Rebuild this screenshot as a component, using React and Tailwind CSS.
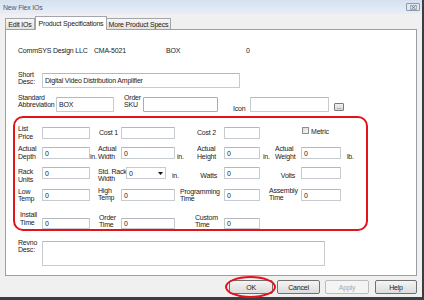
import React from "react";

function Lbl({ c, a, b }) {
  return (
    <div className={"shrink-0 flex flex-col whitespace-nowrap " + c}>
      <span>{a}</span>
      {b ? <span>{b}</span> : null}
    </div>
  );
}

function Inp({ c, v, blue }) {
  return (
    <div
      className={
        "shrink-0 bg-white border rounded-[1px] flex items-center pl-[2px] whitespace-nowrap overflow-hidden " +
        (blue ? "border-[#8fb3dc]" : "border-[#c6cad1] border-t-[#b3b7bf]") +
        " " +
        c
      }
    >
      {v}
    </div>
  );
}

function Btn({ children, disabled }) {
  return (
    <div
      className={
        "w-full h-full border rounded-[2px] flex items-center justify-center " +
        (disabled
          ? "border-[#bcbcbc] bg-[#f4f4f4] text-[#a9a9a9]"
          : "border-[#707070] bg-linear-to-b from-[#f4f4f4] to-[#dcdcdc] text-[#222]")
      }
    >
      {children}
    </div>
  );
}

export default function App() {
  return (
    <div className="w-[424px] h-[300px] bg-[#f0f0f0] border-r-2 border-b-[3px] border-[#3a3d43] flex flex-col font-['Liberation_Sans',Arial,sans-serif] text-[7px] tracking-[-0.2px] text-[#222] leading-none">
      {/* title bar */}
      <div className="h-[14px] shrink-0 flex items-center justify-between pl-[3px] pr-[2px] bg-linear-to-b from-[#d6e1f0] to-[#e7eef8]">
        <span className="text-[#4f5966]">New Flex IOs</span>
        <div className="w-[14px] h-[8px] border border-[#8d99a8] rounded-[1px] bg-[#e2e8f0] flex items-center justify-center">
          <svg width="7" height="5" viewBox="0 0 7 5">
            <rect x="0.5" y="0.5" width="6" height="4" fill="none" stroke="#9aa3ae" strokeWidth="0.8" />
            <path d="M1.5 1L5.5 4M5.5 1L1.5 4" stroke="#6f7a88" strokeWidth="0.9" />
          </svg>
        </div>
      </div>

      {/* tabs */}
      <div className="h-[15px] shrink-0 flex items-end pl-[5px]">
        <div className="w-[30px] h-[11px] border border-b-0 border-[#a3a7ad] bg-linear-to-b from-[#f6f6f6] to-[#e3e3e3] flex items-center justify-center">
          Edit IOs
        </div>
        <div className="relative z-10 w-[72px] h-[14px] -mb-px border border-b-0 border-[#a3a7ad] bg-white flex items-center justify-center">
          Product Specifications
        </div>
        <div className="w-[64px] h-[11px] border border-b-0 border-l-0 border-[#a3a7ad] bg-linear-to-b from-[#f6f6f6] to-[#e3e3e3] flex items-center justify-center">
          More Product Specs
        </div>
      </div>

      {/* panel */}
      <div className="ml-[5px] w-[412px] h-[247px] shrink-0 border border-[#9a9ea5] bg-white flex flex-col">
        {/* company row */}
        <div className="mt-[16px] h-[8px] flex items-center pl-[12px] whitespace-nowrap">
          <span className="w-[76px]">CommSYS Design LLC</span>
          <span className="w-[72px]">CMA-5021</span>
          <span className="w-[80px]">BOX</span>
          <span>0</span>
        </div>

        {/* short desc */}
        <div className="mt-[19px] h-[15px] flex">
          <Lbl c="w-[36px] pl-[12px] leading-[7px] -mt-[2px]" a="Short" b="Desc:" />
          <Inp c="w-[198px] h-[15px]" v="Digital Video Distribution Amplifier" />
        </div>

        {/* abbreviation row */}
        <div className="mt-[9px] h-[15px] flex">
          <Lbl c="w-[50px] pl-[12px] leading-[7px] -mt-[3px]" a="Standard" b="Abbreviation" />
          <Inp c="w-[58px] h-[15px]" v="BOX" />
          <div className="w-[10px] shrink-0" />
          <Lbl c="w-[19px] leading-[7px] -mt-[3px]" a="Order" b="SKU" />
          <Inp c="w-[75px] h-[15px]" blue />
          <div className="w-[32px] shrink-0 flex items-end pl-[15px]">
            <span className="leading-[7px]">Icon</span>
          </div>
          <Inp c="w-[79px] h-[15px]" />
          <div className="ml-[5px] self-end mb-[1px] w-[10px] h-[8px] border border-[#7a7a7a] rounded-[1px] bg-linear-to-b from-[#f0f0f0] to-[#d6d6d6] flex items-center justify-center text-[6px] leading-none">
            ...
          </div>
        </div>

        {/* red annotated block */}
        <div className="mt-[4px] ml-[7px] w-[355px] h-[115px] shrink-0 border-2 border-[#e3121b] rounded-[10px] flex flex-col">
          {/* row 1 */}
          <div className="mt-[9px] h-[12px] flex items-center">
            <Lbl c="w-[27px] pl-[3px] leading-[8px]" a="List" b="Price" />
            <Inp c="w-[48px] h-[12px]" />
            <div className="w-[9px] shrink-0" />
            <Lbl c="w-[22px] leading-[8px]" a="Cost 1" />
            <Inp c="w-[54px] h-[12px]" />
            <Lbl c="w-[49px] pl-[22px] leading-[8px]" a="Cost 2" />
            <Inp c="w-[36px] h-[12px]" />
            <div className="w-[42px] shrink-0" />
            <div className="self-start w-[7px] h-[7px] border border-[#8e8f8f] bg-linear-to-br from-[#d9d9d9] to-[#f8f8f8]" />
            <span className="self-start ml-[2px] mt-px leading-[7px]">Metric</span>
          </div>

          {/* row 2 */}
          <div className="mt-[8px] h-[12px] flex items-center">
            <Lbl c="w-[27px] pl-[3px] leading-[8px]" a="Actual" b="Depth" />
            <Inp c="w-[48px] h-[12px]" v="0" />
            <span className="w-[8px] shrink-0 self-end -mb-[1px] leading-[7px]">in.</span>
            <Lbl c="w-[23px] leading-[8px]" a="Actual" b="Width" />
            <Inp c="w-[54px] h-[12px]" v="0" />
            <span className="w-[22px] shrink-0 pl-[2px] self-end -mb-[1px] leading-[7px]">in.</span>
            <Lbl c="w-[27px] leading-[8px]" a="Actual" b="Height" />
            <Inp c="w-[36px] h-[12px]" v="0" />
            <span className="w-[15px] shrink-0 pl-[3px] self-end -mb-[1px] leading-[7px]">in.</span>
            <Lbl c="w-[26px] leading-[8px]" a="Actual" b="Weight" />
            <Inp c="w-[40px] h-[12px]" v="0" />
            <span className="pl-[6px] self-end -mb-[1px] leading-[7px]">lb.</span>
          </div>

          {/* row 3 */}
          <div className="mt-[8px] h-[12px] flex items-center">
            <Lbl c="w-[27px] pl-[3px] leading-[8px] mt-[6px]" a="Rack" b="Units" />
            <Inp c="w-[48px] h-[12px]" v="0" />
            <div className="w-[8px] shrink-0" />
            <Lbl c="w-[28px] leading-[7px] mt-[4px]" a="Std. Rack" b="Width" />
            <div className="shrink-0 w-[40px] h-[12px] bg-white border border-[#c6cad1] flex items-center justify-between pl-[2px] pr-[2px]">
              <span>0</span>
              <svg width="5" height="3" viewBox="0 0 5 3">
                <path d="M0 0H5L2.5 3Z" fill="#111" />
              </svg>
            </div>
            <div className="w-[58px] h-[12px] shrink-0 flex items-center justify-between pl-[6px] pr-[7px] pt-[4px] leading-[7px]">
              <span>in.</span>
              <span>Watts</span>
            </div>
            <Inp c="w-[36px] h-[12px]" v="0" />
            <div className="w-[41px] h-[12px] shrink-0 flex items-center justify-end pr-[6px] pt-[4px] leading-[7px]">
              <span>Volts</span>
            </div>
            <Inp c="w-[40px] h-[12px]" />
          </div>

          {/* row 4 */}
          <div className="mt-[10px] h-[12px] flex items-center">
            <Lbl c="w-[27px] pl-[3px] leading-[7px]" a="Low" b="Temp" />
            <Inp c="w-[48px] h-[12px]" v="0" />
            <div className="w-[8px] shrink-0" />
            <Lbl c="w-[23px] leading-[7px] -mt-[2px]" a="High" b="Temp" />
            <Inp c="w-[54px] h-[12px]" v="0" />
            <Lbl c="w-[49px] pl-[5px] leading-[7px] -mt-[1px]" a="Programming" b="Time" />
            <Inp c="w-[36px] h-[12px]" v="0" />
            <Lbl c="w-[41px] pl-[9px] leading-[7px] -mt-[3px]" a="Assembly" b="Time" />
            <Inp c="w-[40px] h-[12px]" v="0" />
          </div>

          {/* row 5 */}
          <div className="mt-[17px] h-[11px] flex items-center">
            <Lbl c="w-[27px] pl-[5px] leading-[8px] -mt-[9px]" a="Install" b="Time" />
            <Inp c="w-[48px] h-[11px]" v="0" />
            <div className="w-[8px] shrink-0" />
            <Lbl c="w-[23px] pl-[1px] leading-[7px] -mt-[5px]" a="Order" b="Time" />
            <Inp c="w-[54px] h-[11px]" v="0" />
            <Lbl c="w-[49px] pl-[20px] leading-[7px] -mt-[5px]" a="Custom" b="Time" />
            <Inp c="w-[36px] h-[11px]" v="0" />
          </div>
        </div>

        {/* revno */}
        <div className="mt-[10px] flex">
          <Lbl c="w-[36px] pl-[12px] leading-[7px] -mt-[2px]" a="Revno" b="Desc:" />
          <Inp c="w-[283px] h-[25px]" />
        </div>
      </div>

      {/* buttons */}
      <div className="mt-[4px] h-[14px] shrink-0 flex justify-end pr-[5px]">
        <div className="relative w-[44px] h-[14px]">
          <Btn>OK</Btn>
          <div className="absolute -left-[4px] -top-[4px] w-[51px] h-[22px] rounded-[50%] border-2 border-[#e3121b]" />
        </div>
        <div className="ml-[4px] w-[43px] h-[14px]">
          <Btn>Cancel</Btn>
        </div>
        <div className="ml-[5px] w-[44px] h-[14px]">
          <Btn disabled>Apply</Btn>
        </div>
        <div className="ml-[6px] w-[42px] h-[14px]">
          <Btn>Help</Btn>
        </div>
      </div>
    </div>
  );
}
